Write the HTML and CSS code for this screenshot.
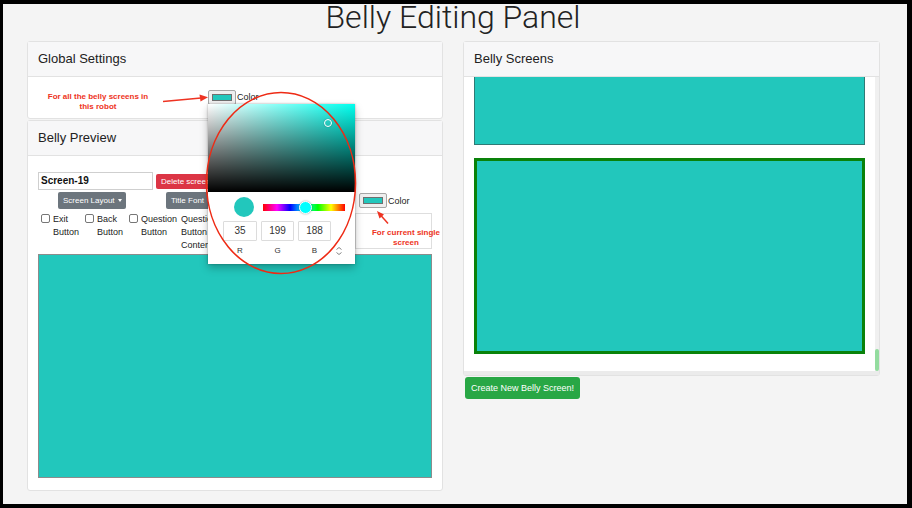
FILE: index.html
```html
<!DOCTYPE html>
<html>
<head>
<meta charset="utf-8">
<link rel="stylesheet" href="styles.css">
</head>
<body>
<div class="frame">
  <h1 class="title">Belly Editing Panel</h1>
  <div class="row">
    <div class="col-left">
      <div class="card card-global">
        <div class="card-header">Global Settings</div>
        <div class="global-body">
          <div class="note note-global">For all the belly screens in<br>this robot</div>
          <svg class="arrow-global" width="45" height="10" viewBox="0 0 45 10">
            <line x1="0" y1="7.5" x2="38" y2="4" stroke="#ee3322" stroke-width="1.5"/>
            <polygon points="45,3.3 36.5,0.5 37.5,7.5" fill="#ee3322"/>
          </svg>
          <span class="swatch"><span class="swatch-fill"></span></span>
          <span class="color-label">Color</span>
        </div>
      </div>
      <div class="card card-preview">
        <div class="card-header">Belly Preview</div>
        <div class="preview-body">
          <div class="line-name">
            <div class="name-input">Screen-19</div>
            <button class="btn btn-danger">Delete screen</button>
          </div>
          <div class="line-buttons">
            <button class="btn btn-gray btn-layout">Screen Layout <span class="caret"></span></button>
            <button class="btn btn-gray btn-font">Title Font</button>
            <span class="swatch swatch-2"><span class="swatch-fill"></span></span>
            <span class="color-label">Color</span>
          </div>
          <div class="line-checks">
            <div class="check"><span class="cb"></span><span class="check-text">Exit<br>Button</span></div>
            <div class="check"><span class="cb"></span><span class="check-text">Back<br>Button</span></div>
            <div class="check"><span class="cb"></span><span class="check-text">Question<br>Button</span></div>
            <div class="check check-plain"><span class="check-text">Question<br>Button<br>Content</span></div>
            <div class="side-box"></div>
          </div>
          <div class="screen-preview"></div>
        </div>
      </div>
    </div>
    <div class="col-right">
      <div class="card card-screens">
        <div class="card-header">Belly Screens</div>
        <div class="screens-body">
          <div class="screens-scroll">
            <div class="screens-list">
              <div class="thumb thumb-top"></div>
              <div class="thumb thumb-active"></div>
            </div>
            <div class="vtrack"><div class="vthumb"></div></div>
          </div>
          <div class="htrack"></div>
        </div>
      </div>
      <button class="btn btn-success">Create New Belly Screen!</button>
    </div>
  </div>

  <div class="picker">
    <div class="picker-sat"><span class="sat-marker"></span></div>
    <div class="picker-controls">
      <span class="picker-dot"></span>
      <div class="hue"><span class="hue-thumb"></span></div>
    </div>
    <div class="picker-inputs">
      <div class="pfield"><div class="pinput">35</div><div class="plabel">R</div></div>
      <div class="pfield"><div class="pinput">199</div><div class="plabel">G</div></div>
      <div class="pfield"><div class="pinput">188</div><div class="plabel">B</div></div>
      <div class="ptoggle">
        <svg width="8" height="10" viewBox="0 0 8 10"><path d="M1.5 3.5 L4 1.5 L6.5 3.5 M1.5 6.5 L4 8.5 L6.5 6.5" fill="none" stroke="#666" stroke-width="0.8"/></svg>
      </div>
    </div>
  </div>

  <svg class="ring" width="152" height="186" viewBox="0 0 152 186">
    <ellipse cx="76" cy="92" rx="74.5" ry="90.5" fill="none" stroke="#ee2a14" stroke-width="1.6"/>
  </svg>

  <div class="note note-screen">For current single<br>screen</div>
  <svg class="arrow-screen" width="20" height="20" viewBox="0 0 20 20">
    <line x1="15" y1="15.5" x2="7.5" y2="7" stroke="#ee3322" stroke-width="1.5"/>
    <polygon points="4,3 11,6.5 6.5,10.5" fill="#ee3322"/>
  </svg>
</div>
</body>
</html>
```

FILE: styles.css
```css
* { box-sizing: border-box; }
html, body { margin: 0; padding: 0; background: #000; }
body {
  font-family: "Liberation Sans", Arial, sans-serif;
  color: #212529;
  padding: 4px 5px 4px 3px;
}
.frame {
  position: relative;
  width: 904px;
  height: 500px;
  background: #f4f4f4;
  overflow: hidden;
}
.title {
  margin: 0 0 11px 0;
  height: 26px;
  line-height: 26px;
  font-family: Roboto, "Liberation Sans", Arial, sans-serif;
  font-weight: 300;
  font-size: 32px;
  color: #222;
  text-align: center;
  padding-right: 4px;
  white-space: nowrap;
}
.row {
  display: flex;
  gap: 20px;
  padding: 0 27px 0 24px;
}
.col-left { width: 416px; display: flex; flex-direction: column; gap: 1px; }
.col-right { width: 417px; display: flex; flex-direction: column; align-items: flex-start; }
.card {
  background: #fff;
  border: 1px solid #e2e2e2;
  border-radius: 3px;
  width: 100%;
}
.card-header {
  height: 35px;
  line-height: 34px;
  padding: 0 10px;
  font-size: 13px;
  background: #f7f7f8;
  border-bottom: 1px solid #e2e2e2;
  color: #222;
}
.global-body {
  height: 41px;
  display: flex;
  align-items: center;
  padding-top: 8px;
}
.note {
  color: #ee3322;
  font-weight: bold;
  font-size: 8px;
  line-height: 10px;
  text-align: center;
}
.note-global { width: 135px; padding-left: 5px; }
.arrow-global { display: block; margin-top: -5px; }
.swatch {
  display: inline-flex;
  width: 28px;
  height: 15px;
  padding: 3px 3px;
  border: 1px solid #a6a6a6;
  border-radius: 2px;
  background: #efefef;
}
.swatch-fill {
  flex: 1;
  background: #22c7bc;
  border: 1px solid #6f6f6f;
}
.global-body .swatch { margin-top: -9px; }
.color-label { font-size: 9px; color: #222; padding-left: 1px; }
.global-body .color-label { margin-top: -9px; }

.card-preview { height: 371px; }
.preview-body { padding: 16px 10px 0 10px; }
.line-name { display: flex; align-items: flex-start; height: 20px; }
.name-input {
  width: 115px;
  height: 18px;
  border: 1px solid #cfcfcf;
  font-weight: bold;
  font-size: 10px;
  line-height: 16px;
  padding-left: 2px;
  color: #111;
}
.btn {
  font-family: "Liberation Sans", Arial, sans-serif;
  border: none;
  color: #fff;
  border-radius: 2px;
  padding: 0 5px;
  cursor: pointer;
  white-space: nowrap;
}
.btn-danger {
  background: #dc3545;
  height: 15px;
  font-size: 8px;
  margin: 2px 0 0 3px;
  width: 70px;
  text-align: left;
}
.line-buttons { display: flex; align-items: center; height: 17px; }
.btn-gray { background: #6c757d; height: 17px; font-size: 8px; }
.btn-layout { margin-left: 20px; width: 68px; text-align: left; padding: 0 0 0 5px; }
.caret {
  display: inline-block;
  width: 0; height: 0;
  border-left: 2.5px solid transparent;
  border-right: 2.5px solid transparent;
  border-top: 3px solid #fff;
  vertical-align: 1px;
  margin-left: 1px;
}
.btn-font { margin-left: 40px; width: 52px; text-align: left; }
.swatch-2 { margin-left: 141px; }
.line-checks {
  display: flex;
  height: 45px;
  padding-top: 3px;
  padding-left: 3px;
}
.check { display: flex; width: 44px; font-size: 9px; line-height: 13px; color: #222; }
.cb {
  width: 9px; height: 9px;
  border: 1px solid #767676;
  border-radius: 2px;
  background: #fff;
  margin-top: 2px;
  margin-right: 3px;
  flex: none;
}
.check-text { padding-top: 1px; }
.check-plain { margin-left: 8px; width: 120px; }
.side-box {
  width: 77px;
  height: 36px;
  border: 1px solid #dedede;
  margin-left: 54px;
  margin-top: 1px;
}
.screen-preview {
  width: 394px;
  height: 224px;
  background: #22c7bc;
  border: 1px solid #8c8c8c;
}

.card-screens { height: 335px; }
.screens-body { height: 298px; display: flex; flex-direction: column; }
.screens-scroll { flex: 1; display: flex; }
.screens-list { flex: 1; padding-left: 10px; }
.thumb { width: 391px; background: #22c7bc; }
.thumb-top {
  height: 68px;
  border: 1px solid #2f7a75;
  border-top: none;
}
.thumb-active {
  height: 196px;
  border: 3px solid #0a820a;
  margin-top: 13px;
}
.vtrack {
  width: 4px;
  background: #f0f0f0;
  display: flex;
  flex-direction: column;
  justify-content: flex-end;
}
.vthumb { height: 22px; background: #93dc9f; border-radius: 2px; }
.htrack { height: 4px; background: #ebebeb; }
.btn-success {
  background: #28a745;
  height: 22px;
  width: 115px;
  font-size: 9px;
  border-radius: 3px;
  margin: 1px 0 0 2px;
  padding: 0;
}

.picker {
  position: absolute;
  left: 205px;
  top: 100px;
  width: 147px;
  height: 160px;
  background: #fff;
  box-shadow: 0 0 2px rgba(0,0,0,0.3), 0 4px 8px rgba(0,0,0,0.25);
}
.picker-sat {
  position: relative;
  height: 88px;
  background:
    linear-gradient(to top, #000, rgba(0,0,0,0)),
    linear-gradient(to right, #fff, hsl(176, 100%, 50%));
}
.sat-marker {
  position: absolute;
  left: 116px;
  top: 15px;
  width: 8px;
  height: 8px;
  border-radius: 50%;
  border: 1.2px solid #fff;
  box-shadow: 0 0 1px rgba(0,0,0,0.5);
}
.picker-controls {
  display: flex;
  align-items: center;
  padding: 5px 0 0 26px;
  height: 25px;
}
.picker-dot {
  width: 20px; height: 20px;
  border-radius: 50%;
  background: #22c7bc;
  flex: none;
}
.hue {
  position: relative;
  width: 82px;
  height: 7px;
  margin-left: 9px;
  margin-top: 1px;
  background: linear-gradient(to right, #f00 0%, #f0f 17%, #00f 33%, #0ff 50%, #0f0 67%, #ff0 83%, #f00 100%);
}
.hue-thumb {
  position: absolute;
  left: 36px;
  top: -3px;
  width: 13px; height: 13px;
  border-radius: 50%;
  background: #0ff;
  border: 1.5px solid #fff;
  box-shadow: 0 0 2px rgba(0,0,0,0.4);
}
.picker-inputs {
  display: flex;
  gap: 4px;
  padding: 4px 0 0 15px;
}
.pfield { width: 33px; }
.pfield:first-child { width: 34px; }
.pinput {
  height: 20px;
  border: 1px solid #dcdcdc;
  border-radius: 1px;
  text-align: center;
  font-size: 10px;
  line-height: 18px;
  color: #333;
}
.plabel {
  text-align: center;
  font-size: 8px;
  line-height: 10px;
  margin-top: 5px;
  color: #333;
}
.ptoggle { padding-top: 25px; }
.ptoggle svg { display: block; }

.ring { position: absolute; left: 202px; top: 87px; }
.note-screen { position: absolute; left: 363px; top: 224px; width: 80px; }
.arrow-screen { position: absolute; left: 370px; top: 204px; }
```
